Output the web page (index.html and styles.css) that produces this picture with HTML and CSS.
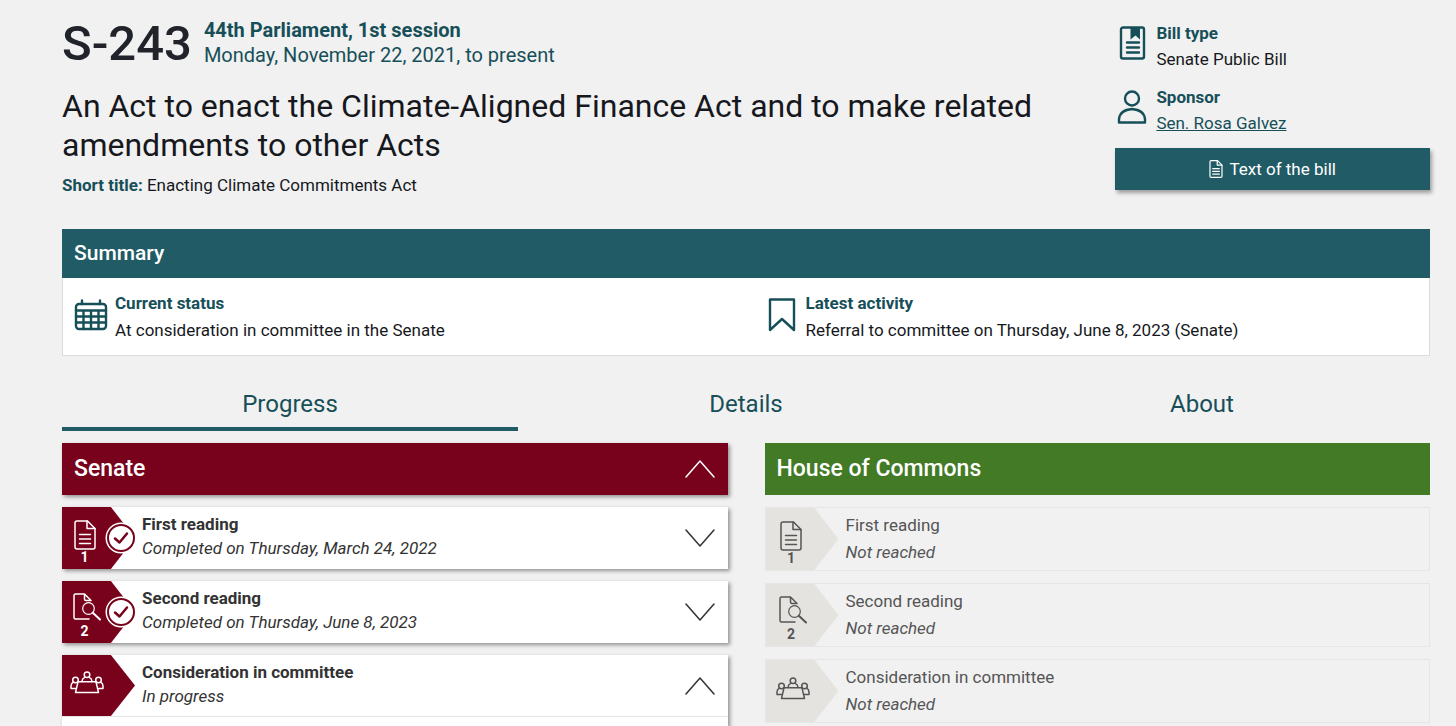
FILE: index.html
```html
<!DOCTYPE html>
<html lang="en">
<head>
  <meta charset="UTF-8">
  <meta name="viewport" content="width=device-width, initial-scale=1">
  <title>S-243</title>
  <link rel="stylesheet" href="styles.css">
</head>
<body>

<!-- Icons shared by the sections below -->
<svg class="icon-defs" aria-hidden="true">
  <symbol id="icon-doc" viewBox="0 0 22 30">
    <path d="M3 1H13.500L21 8.500V27a2 2 0 0 1-2 2H3a2 2 0 0 1-2-2V3a2 2 0 0 1 2-2Z"/>
    <path d="M13 1V8.500H21M5.500 14.500H16.500M5.500 19H16.500M5.500 23.500H16.500"/>
  </symbol>
  <symbol id="icon-doc-search" viewBox="0 0 28 28">
    <path d="M16 26H2.500A1.500 1.500 0 0 1 1 24.500V2.500A1.500 1.500 0 0 1 2.500 1H11.500L18 7.500H13A1.500 1.500 0 0 1 11.500 6V1"/>
    <circle cx="15.500" cy="15.500" r="5.800" stroke-width="1.2"/>
    <path d="M19.800 19.800L27 26.500" stroke-width="2"/>
  </symbol>
  <symbol id="icon-committee" viewBox="0 0 34 23">
    <circle cx="17" cy="3.800" r="2.800"/>
    <path d="M12.200 10.500V9.500Q12.200 7.500 14.500 6.600M21.800 10.500V9.500Q21.800 7.500 19.500 6.600"/>
    <circle cx="5.500" cy="9" r="2.800"/>
    <circle cx="28.500" cy="9" r="2.800"/>
    <path d="M3.500 11.200Q1 12.500 1 15V17.500H6M30.500 11.200Q33 12.500 33 15V17.500H28"/>
    <path d="M8 10.800H26L28.500 21.500H5.500Z"/>
  </symbol>
  <symbol id="icon-check" viewBox="0 0 32 32">
    <circle class="check-edge" cx="16" cy="16" r="15.500"/>
    <circle class="check-ring" cx="16" cy="16" r="13"/>
    <path class="check-mark" d="M10 16.500L14.500 20.500L22 11.500"/>
  </symbol>
  <symbol id="icon-down" viewBox="0 0 30 18"><path d="M1 1L15 17L29 1"/></symbol>
  <symbol id="icon-up" viewBox="0 0 30 18"><path d="M1 17L15 1L29 17"/></symbol>
</svg>

<main class="page">

  <header class="bill-header">
    <div class="bill-main">
      <div class="bill-id">
        <h1 class="bill-number">S-243</h1>
        <div class="session">
          <strong>44th Parliament, 1st session</strong>
          <span>Monday, November 22, 2021, to present</span>
        </div>
      </div>
      <h2 class="bill-title">An Act to enact the Climate-Aligned Finance Act and to make related amendments to other Acts</h2>
      <p class="short-title"><strong class="label">Short title:</strong> Enacting Climate Commitments Act</p>
    </div>

    <aside class="bill-side">
      <div class="fact">
        <svg class="fact-icon" viewBox="0 0 34 34">
          <rect x="6" y="1.500" width="23" height="31" rx="2"/>
          <path class="solid" d="M15.500 1.500H25V13.500L20.500 9.500L15.500 13.500Z"/>
          <path d="M12 16.500H24M12 21.500H24M12 26.500H24"/>
        </svg>
        <div class="fact-text">
          <strong class="label">Bill type</strong>
          <span>Senate Public Bill</span>
        </div>
      </div>
      <div class="fact">
        <svg class="fact-icon" viewBox="0 0 34 34">
          <circle cx="17" cy="8.500" r="7"/>
          <path d="M4 32.500V29Q5 20 17 19Q29 20 30 29V32.500Z"/>
        </svg>
        <div class="fact-text">
          <strong class="label">Sponsor</strong>
          <a href="#">Sen. Rosa Galvez</a>
        </div>
      </div>
      <a class="bill-link" href="#">
        <svg class="link-icon"><use href="#icon-doc"/></svg>
        Text of the bill
      </a>
    </aside>
  </header>

  <section class="summary">
    <h2 class="summary-head">Summary</h2>
    <div class="summary-body">
      <div class="fact">
        <svg class="fact-icon" viewBox="0 0 34 34">
          <rect x="2" y="6" width="30" height="25" rx="3"/>
          <path d="M8 2.500V6M26 2.500V6M2 12.500H32M2 18.500H32M2 24.500H32M9.500 12.500V31M17 12.500V31M24.500 12.500V31"/>
        </svg>
        <div class="fact-text">
          <strong class="label">Current status</strong>
          <span>At consideration in committee in the Senate</span>
        </div>
      </div>
      <div class="fact">
        <svg class="fact-icon" viewBox="0 0 34 34">
          <path d="M5 1.500H29V32L17 21L5 32Z"/>
        </svg>
        <div class="fact-text">
          <strong class="label">Latest activity</strong>
          <span>Referral to committee on Thursday, June 8, 2023 (Senate)</span>
        </div>
      </div>
    </div>
  </section>

  <nav class="tabs">
    <a class="tab active" href="#">Progress</a>
    <a class="tab" href="#">Details</a>
    <a class="tab" href="#">About</a>
  </nav>

  <div class="chambers">
    <section class="chamber senate">
      <button class="chamber-head" type="button" aria-expanded="true">
        Senate
        <svg class="chevron"><use href="#icon-up"/></svg>
      </button>
      <div class="stage">
        <button class="stage-row" type="button">
          <span class="badge"><svg class="icon-doc"><use href="#icon-doc"/></svg><b>1</b></span>
          <svg class="check"><use href="#icon-check"/></svg>
          <span class="stage-text"><strong>First reading</strong><em>Completed on Thursday, March 24, 2022</em></span>
          <svg class="chevron"><use href="#icon-down"/></svg>
        </button>
      </div>
      <div class="stage">
        <button class="stage-row" type="button">
          <span class="badge"><svg class="icon-search"><use href="#icon-doc-search"/></svg><b>2</b></span>
          <svg class="check"><use href="#icon-check"/></svg>
          <span class="stage-text"><strong>Second reading</strong><em>Completed on Thursday, June 8, 2023</em></span>
          <svg class="chevron"><use href="#icon-down"/></svg>
        </button>
      </div>
      <div class="stage open">
        <button class="stage-row" type="button" aria-expanded="true">
          <span class="badge"><svg class="icon-committee"><use href="#icon-committee"/></svg></span>
          <span class="stage-text"><strong>Consideration in committee</strong><em>In progress</em></span>
          <svg class="chevron"><use href="#icon-up"/></svg>
        </button>
      </div>
    </section>

    <section class="chamber commons">
      <h2 class="chamber-head">House of Commons</h2>
      <div class="stage">
        <div class="stage-row">
          <span class="badge"><svg class="icon-doc"><use href="#icon-doc"/></svg><b>1</b></span>
          <span class="stage-text"><span>First reading</span><em>Not reached</em></span>
        </div>
      </div>
      <div class="stage">
        <div class="stage-row">
          <span class="badge"><svg class="icon-search"><use href="#icon-doc-search"/></svg><b>2</b></span>
          <span class="stage-text"><span>Second reading</span><em>Not reached</em></span>
        </div>
      </div>
      <div class="stage">
        <div class="stage-row">
          <span class="badge"><svg class="icon-committee"><use href="#icon-committee"/></svg></span>
          <span class="stage-text"><span>Consideration in committee</span><em>Not reached</em></span>
        </div>
      </div>
    </section>
  </div>

</main>

</body>
</html>
```
FILE: styles.css
```css
* { box-sizing: border-box; }
body { margin: 0; background: #f1f1f1; color: #16181d; font-family: Roboto, "Liberation Sans", sans-serif; font-size: 17px; line-height: 26px; }
h1, h2, p { margin: 0; }
button { font: inherit; border: 0; text-align: left; cursor: pointer; }
a { color: #174f59; }
svg { flex: none; fill: none; stroke: currentColor; stroke-width: 1.5; stroke-linejoin: round; stroke-linecap: round; }
.icon-defs { position: absolute; width: 0; height: 0; }
.label { color: #174f59; font-weight: 700; }

.page { display: flex; flex-direction: column; min-height: 100vh; padding: 18px 26px 0 62px; }

/* Header */
.bill-header { display: grid; grid-template-columns: 1fr 23%; gap: 60px; }
.bill-id { display: flex; gap: 12px; align-items: center; }
.bill-number { font-size: 49px; line-height: 52px; font-weight: 500; color: #20232a; }
.session { display: flex; flex-direction: column; padding-bottom: 2px; color: #174f59; font-size: 20px; line-height: 25px; }
.bill-title { margin-top: 17px; font-size: 32px; line-height: 39px; font-weight: 400; }
.short-title { margin-top: 7px; }
.bill-side { display: flex; flex-direction: column; gap: 12px; padding-top: 2px; }
.fact { display: flex; gap: 7px; }
.fact-icon { width: 34px; height: 34px; margin-top: 6px; color: #174f59; stroke-width: 2.4; }
.fact-icon .solid { fill: currentColor; stroke: none; }
.fact-text { display: flex; flex-direction: column; }
.bill-link { display: flex; justify-content: center; align-items: center; gap: 6px; height: 42px; background: #215b65; color: #fff; text-decoration: none; box-shadow: 2px 3px 4px rgba(0, 0, 0, .35); }
.link-icon { width: 14px; height: 18px; stroke-width: 2; }

/* Summary */
.summary { margin-top: 31px; }
.summary-head { padding: 12px; background: #215b65; color: #fff; font-size: 21px; line-height: 25px; font-weight: 500; }
.summary-body { display: grid; grid-template-columns: 1fr 1fr; gap: 37px; padding: 12px 11px 11px; line-height: 27px; background: #fff; border: 1px solid #dcdcdc; border-top: 0; }
.summary-body .fact-icon { margin-top: 8px; }

/* Tabs */
.tabs { display: grid; grid-template-columns: repeat(3, 1fr); margin-top: 23px; }
.tab { padding: 10px 0 8px; border-bottom: 4px solid transparent; font-size: 24px; line-height: 30px; text-align: center; text-decoration: none; }
.tab.active { border-color: #215b65; }

/* Chambers */
.chambers { flex: 1; display: grid; grid-template-columns: 1fr 1fr; gap: 37px; margin-top: 12px; }
.chamber { display: flex; flex-direction: column; gap: 12px; }
.chamber-head { display: flex; justify-content: space-between; align-items: center; height: 52px; padding: 0 13px 0 12px; color: #fff; font-size: 23px; font-weight: 500; }
.senate .chamber-head { background: #78021b; box-shadow: 2px 2px 4px rgba(0, 0, 0, .4); }
.commons .chamber-head { background: #427a25; }
.chevron { width: 30px; height: 18px; }
.stage-row { position: relative; display: flex; align-items: center; width: 100%; height: 62px; padding: 0; background: none; color: #333; }
.stage-row .chevron { margin: 0 13px 0 auto; }
.stage-text { display: flex; flex-direction: column; }
.badge { display: flex; flex-direction: column; align-items: center; justify-content: center; width: 73px; height: 100%; padding: 8px 28px 0 0; clip-path: polygon(0 0, 67% 0, 100% 50%, 67% 100%, 0 100%); }
.badge b { font-size: 14px; line-height: 15px; }
.icon-doc { width: 22px; height: 30px; }
.icon-search { width: 28px; height: 28px; margin: 0 0 3px 4px; }
.icon-committee { width: 34px; height: 23px; margin: 0 0 14px 4px; }

.senate .stage { background: #fff; box-shadow: 2px 2px 4px rgba(0, 0, 0, .4); }
.senate .stage.open { flex: 1; }
.senate .stage.open .stage-row { border-bottom: 1px solid #e6e6e6; }
.senate .badge { background: #78021b; color: #fff; }
.senate .stage-text { margin-left: 7px; padding-bottom: 4px; line-height: 24px; }
.check { position: absolute; left: 43px; top: 15px; width: 32px; height: 32px; color: #78021b; }
.check-edge { fill: #fff; stroke: none; }
.check-ring { stroke-width: 2; }
.check-mark { stroke-width: 2.5; }

.commons .stage { border: 1px solid #e6e6e6; color: #555; }
.commons .stage-row { color: #555; }
.commons .badge { background: #e4e3e0; padding-right: 22px; }
.commons .stage-text { margin-left: 7px; line-height: 27px; }
```
